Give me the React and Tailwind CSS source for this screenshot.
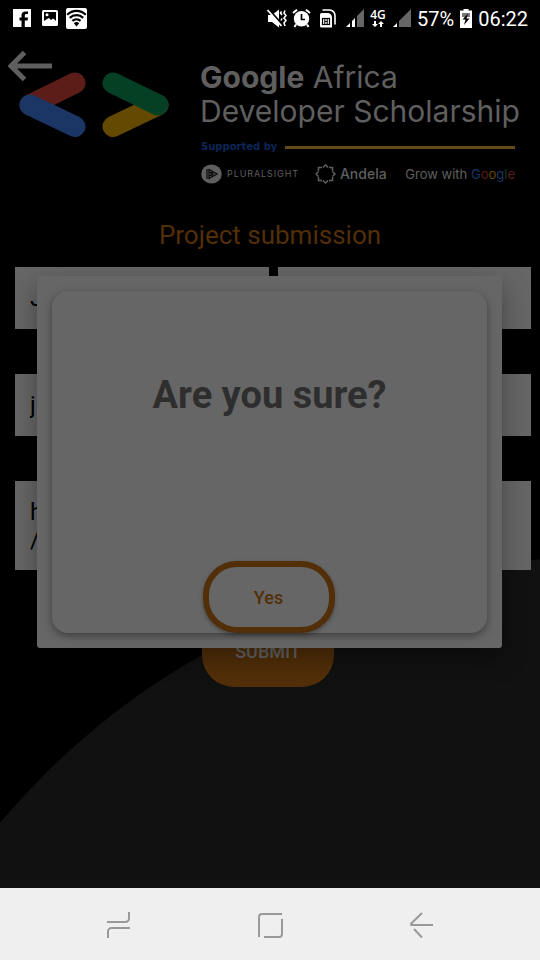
import React from "react";

function StatusBar() {
  return (
    <div className="flex h-9 shrink-0 items-center bg-black pl-[13px] pr-3 text-white">
      <svg width="18" height="18" viewBox="0 0 18 18" aria-hidden="true">
        <rect width="18" height="18" fill="#fff" />
        <path d="M8.500 18v-6.500H6.500V8.500h2V6.500C8.500 3.900 10 2.400 12.500 2.400H15V5h-1.500c-1.200 0-1.700.5-1.700 1.600v1.900H15l-.4 3h-2.800V18z" fill="#000" />
      </svg>
      <svg className="ml-[11px]" width="16" height="16" viewBox="0 0 16 16" aria-hidden="true">
        <rect width="16" height="16" rx="1.500" fill="#fff" />
        <path d="M2 2h12v9l-1.500-1.500L11 8.500 9 10 7 8l-2 1-3 2z" fill="#000" />
        <circle cx="5" cy="4.800" r="1.500" fill="#fff" />
      </svg>
      <svg className="ml-2" width="21" height="21" viewBox="0 0 21 21" aria-hidden="true">
        <rect width="21" height="21" rx="2" fill="#fff" />
        <g fill="none" stroke="#000" strokeWidth="2.200">
          <path d="M1.200 6.700a13 13 0 0 1 18.600 0" />
          <path d="M3.800 9.900a9.500 9.500 0 0 1 13.400 0" />
          <path d="M6.400 12.900a6 6 0 0 1 8.200 0" />
        </g>
        <path d="M7.800 15.200a4 4 0 0 1 5.400 0L10.500 18.500z" fill="#000" />
      </svg>

      <svg className="ml-auto" width="20" height="19" viewBox="0 0 20 19" aria-hidden="true">
        <path d="M1 6h4l7-5.500v18L5 13H1z" fill="#fff" />
        <path d="M1.500 0l14 16" stroke="#000" strokeWidth="2" />
        <path d="M.5 1l14 16" stroke="#fff" strokeWidth="1.800" />
        <path d="M14.500 2.500l-1 1.500 1.500 2M18 1.500l-1 2.500 2 2.500-2 2.500 2 2.500-2 2.500 1 3M15 9.500l-1 2" fill="none" stroke="#fff" strokeWidth="1.600" />
      </svg>
      <svg className="ml-[5px]" width="19" height="19" viewBox="0 0 19 19" aria-hidden="true">
        <circle cx="9.500" cy="9.800" r="7.700" fill="#fff" />
        <path d="M1 4l4-3.300M18 4l-4-3.300M4 15.500L2.500 18M15 15.500l1.500 2.500" stroke="#fff" strokeWidth="2" />
        <path d="M9.500 5v5.500H13" fill="none" stroke="#000" strokeWidth="1.700" />
      </svg>
      <svg className="ml-2" width="17" height="19" viewBox="0 0 17 19" aria-hidden="true">
        <path d="M3.500 1h7.500Q16 2 16 7v8.500" fill="none" stroke="#fff" strokeWidth="1.600" />
        <path d="M1 5.500A1.500 1.500 0 0 1 2.500 4H9q4 .5 4 5v9.500H2.500A1.500 1.500 0 0 1 1 17z" fill="#fff" />
        <rect x="3.500" y="9.500" width="7" height="6" fill="none" stroke="#000" strokeWidth="1.200" />
        <path d="M5.800 9.500v6M8.200 9.500v6M5.800 12.500h2.400" stroke="#000" />
      </svg>
      <svg className="ml-[10px]" width="18" height="18" viewBox="0 0 18 18" aria-hidden="true">
        <path d="M0 18l4-4v4zM6 12l3-3v9H6z" fill="#fff" />
        <path d="M11 7l7-7v18h-7z" fill="#666" />
      </svg>
      <div className="ml-[6px] flex w-4 flex-col items-center">
        <span className="font-['Open_Sans','Noto_Sans',sans-serif] text-[12px] font-semibold leading-3">4G</span>
        <svg width="12" height="6" viewBox="0 0 12 6" aria-hidden="true">
          <path d="M2 0h2v3h2L3 6 0 3h2zM8 6h2V3h2L9 0 6 3h2z" fill="#fff" />
        </svg>
      </div>
      <svg className="ml-[7px]" width="18" height="18" viewBox="0 0 18 18" aria-hidden="true">
        <path d="M18 0v18H6v-6z" fill="#666" />
        <path d="M0 18l4-4v4z" fill="#fff" />
      </svg>
      <span className="ml-[6px] pt-0.5 text-[20px] leading-6">57%</span>
      <svg className="ml-[6px]" width="12" height="19" viewBox="0 0 12 19" aria-hidden="true">
        <path d="M3.500 0h5v1.500H12V19H0V1.500h3.500z" fill="#fff" />
        <path d="M2 4h8v4H2z" fill="#777" />
        <path d="M8 4.500L2.500 10.500H5.500L4 16l5.500-6.500h-3z" fill="#000" />
      </svg>
      <span className="ml-[6px] pt-0.5 text-[20px] leading-6">06:22</span>
    </div>
  );
}

function BracketLogo() {
  return (
    <svg width="152" height="66" viewBox="0 0 152 66" fill="none" strokeWidth="21" strokeLinecap="round" role="img" aria-label="Developer logo">
      <path d="M57 11L12 33" stroke="#5c1c17" />
      <path d="M12 33L57 54.500" stroke="#1b3665" />
      <path d="M95 54.500L140 33" stroke="#644900" />
      <path d="M95 11L140 33" stroke="#064024" />
    </svg>
  );
}

function Header() {
  return (
    <header className="relative flex h-[155px] pl-[18px] pr-[25px]">
      <div className="pt-9">
        <BracketLogo />
      </div>
      <button type="button" aria-label="Back" className="absolute left-2 top-3">
        <svg width="45" height="36" viewBox="0 0 45 36" fill="none" stroke="#5f5f5f" strokeWidth="5">
          <path d="M44 18H3M16.500 4.500L3 18l13.500 13.500" />
        </svg>
      </button>
      <div className="ml-[30px] min-w-0 flex-1 whitespace-nowrap pt-6 text-[#5f5f5f]">
        <h1 className="font-['Inter',sans-serif] text-[30px] leading-[34px]">
          <strong className="font-bold">Google</strong> Africa
          <br />
          Developer Scholarship
        </h1>
        <div className="mt-[11px] flex items-center gap-2 pl-px">
          <span className="font-['DejaVu_Sans',sans-serif] text-[10px] font-bold leading-4 text-[#0c2658]">Supported by</span>
          <span className="h-[3px] flex-1 bg-[#65481b]" />
        </div>
        <div className="mt-[9px] flex items-center pl-px">
          <svg width="21" height="20" viewBox="0 0 21 20" aria-hidden="true">
            <ellipse cx="10.500" cy="10" rx="10.300" ry="9.500" fill="#5f5f5f" />
            <path d="M6 5v10M8 5.500l8 4.500-8 4.500zM8 8l4 2-4 2M11 7v6" fill="none" stroke="#000" strokeWidth="1.100" />
          </svg>
          <span className="ml-[5px] font-['Inter',sans-serif] text-[9px] leading-5 tracking-widest">PLURALSIGHT</span>
          <svg className="ml-4" width="21" height="20" viewBox="0 0 21 20" fill="none" stroke="#5f5f5f" strokeWidth="1.500" aria-hidden="true">
            <path d="M8 3.500L10.500 1 13 3.500M14 3.500h3.500V7M17.500 7.500L20 10l-2.500 2.500M17.500 13v3.500H14M13 16.500L10.500 19 8 16.500M7 16.500H3.500V13M3.500 12.500L1 10l2.500-2.500M3.500 7V3.500H7" />
          </svg>
          <span className="ml-1 font-['Inter',sans-serif] text-[14px] font-medium leading-5">Andela</span>
          <span className="ml-auto font-['Inter',sans-serif] text-[13px] leading-5">
            Grow with <span className="text-[#1b3665]">G</span>
            <span className="text-[#5c1c17]">o</span>
            <span className="text-[#644900]">o</span>
            <span className="text-[#1b3665]">g</span>
            <span className="text-[#064024]">l</span>
            <span className="text-[#5c1c17]">e</span>
          </span>
        </div>
      </div>
    </header>
  );
}

const fieldClass =
  "block w-full min-w-0 resize-none rounded-none border-0 bg-[#666] px-[15px] text-2xl leading-7 text-black outline-none";

function SubmissionForm() {
  return (
    <form className="relative flex flex-col gap-[45px] pl-[15px] pr-[9px]">
      <div className="grid grid-cols-2 gap-[9px]">
        <input aria-label="First name" className={fieldClass + " h-[62px]"} defaultValue="J" />
        <input aria-label="Last name" className={fieldClass + " h-[62px]"} />
      </div>
      <input aria-label="Email address" className={fieldClass + " h-[62px]"} defaultValue="j" />
      <textarea aria-label="Project link" rows={2} className={fieldClass + " h-[89px] overflow-hidden py-[17px]"} defaultValue={"h\n/"} />
      <button type="button" className="mr-[10px] h-[72px] w-[132px] self-center rounded-[32px] bg-[#522f09] pt-0.5 text-lg font-medium text-[#666]">
        SUBMIT
      </button>
    </form>
  );
}

function ConfirmDialog() {
  return (
    <div className="absolute inset-0 flex items-center pl-[37px] pr-[38px]">
      <div
        role="dialog"
        aria-labelledby="confirm-title"
        className="h-[372px] w-full rounded-[3px] bg-[#666] p-[15px] shadow-[0_10px_26px_rgba(0,0,0,0.35)]"
      >
        <div className="flex h-full flex-col items-center justify-between rounded-2xl bg-[#666] pt-20 shadow-[0_3px_8px_rgba(0,0,0,0.4)]">
          <h2 id="confirm-title" className="text-[38px] font-bold leading-[48px] text-[#2e2e2e]">
            Are you sure?
          </h2>
          <button
            type="button"
            className="mr-0.5 h-[72px] w-[132px] rounded-[34px] border-6 border-[#522f09] bg-[#666] pt-0.5 text-lg font-medium text-[#522f09] shadow-[0_2px_4px_rgba(0,0,0,0.3)]"
          >
            Yes
          </button>
        </div>
      </div>
    </div>
  );
}

function NavigationBar() {
  return (
    <nav className="grid h-[72px] shrink-0 grid-cols-[1fr_65px_1fr] items-center bg-[#efefef] px-[100px] pt-0.5 text-[#999]">
      <button type="button" aria-label="Recent apps" className="justify-self-start pl-[6px]">
        <svg width="24" height="28" viewBox="0 0 24 28" fill="none" stroke="currentColor" strokeWidth="2">
          <path d="M1 11h18.500a3.500 3.500 0 0 0 3.500-3.500V1M24 17H5.500A3.500 3.500 0 0 0 2 20.500V27" />
        </svg>
      </button>
      <button type="button" aria-label="Home" className="justify-self-center">
        <svg width="26" height="26" viewBox="0 0 26 26" fill="none" stroke="currentColor" strokeWidth="2">
          <path d="M2 25V5a3 3 0 0 1 3-3h20M25 7v15a3 3 0 0 1-3 3H7" />
        </svg>
      </button>
      <button type="button" aria-label="Back" className="justify-self-end pr-[6px]">
        <svg width="25" height="28" viewBox="0 0 25 28" fill="none" stroke="currentColor" strokeWidth="2">
          <path d="M24 14H3q-2 0-.5-1.800L13 2M5 18l8 8.500" />
        </svg>
      </button>
    </nav>
  );
}

export default function App() {
  return (
    <div className="flex min-h-screen flex-col bg-black font-['Roboto',sans-serif]">
      <StatusBar />
      <main className="relative flex-1 overflow-hidden">
        <div className="absolute left-[-173px] top-[523px] size-[1478px] rounded-full bg-[#111]" />
        <Header />
        <h2 className="relative mb-4 mt-7 text-center text-[26px] leading-8 text-[#522f09]">Project submission</h2>
        <SubmissionForm />
        <ConfirmDialog />
      </main>
      <NavigationBar />
    </div>
  );
}
